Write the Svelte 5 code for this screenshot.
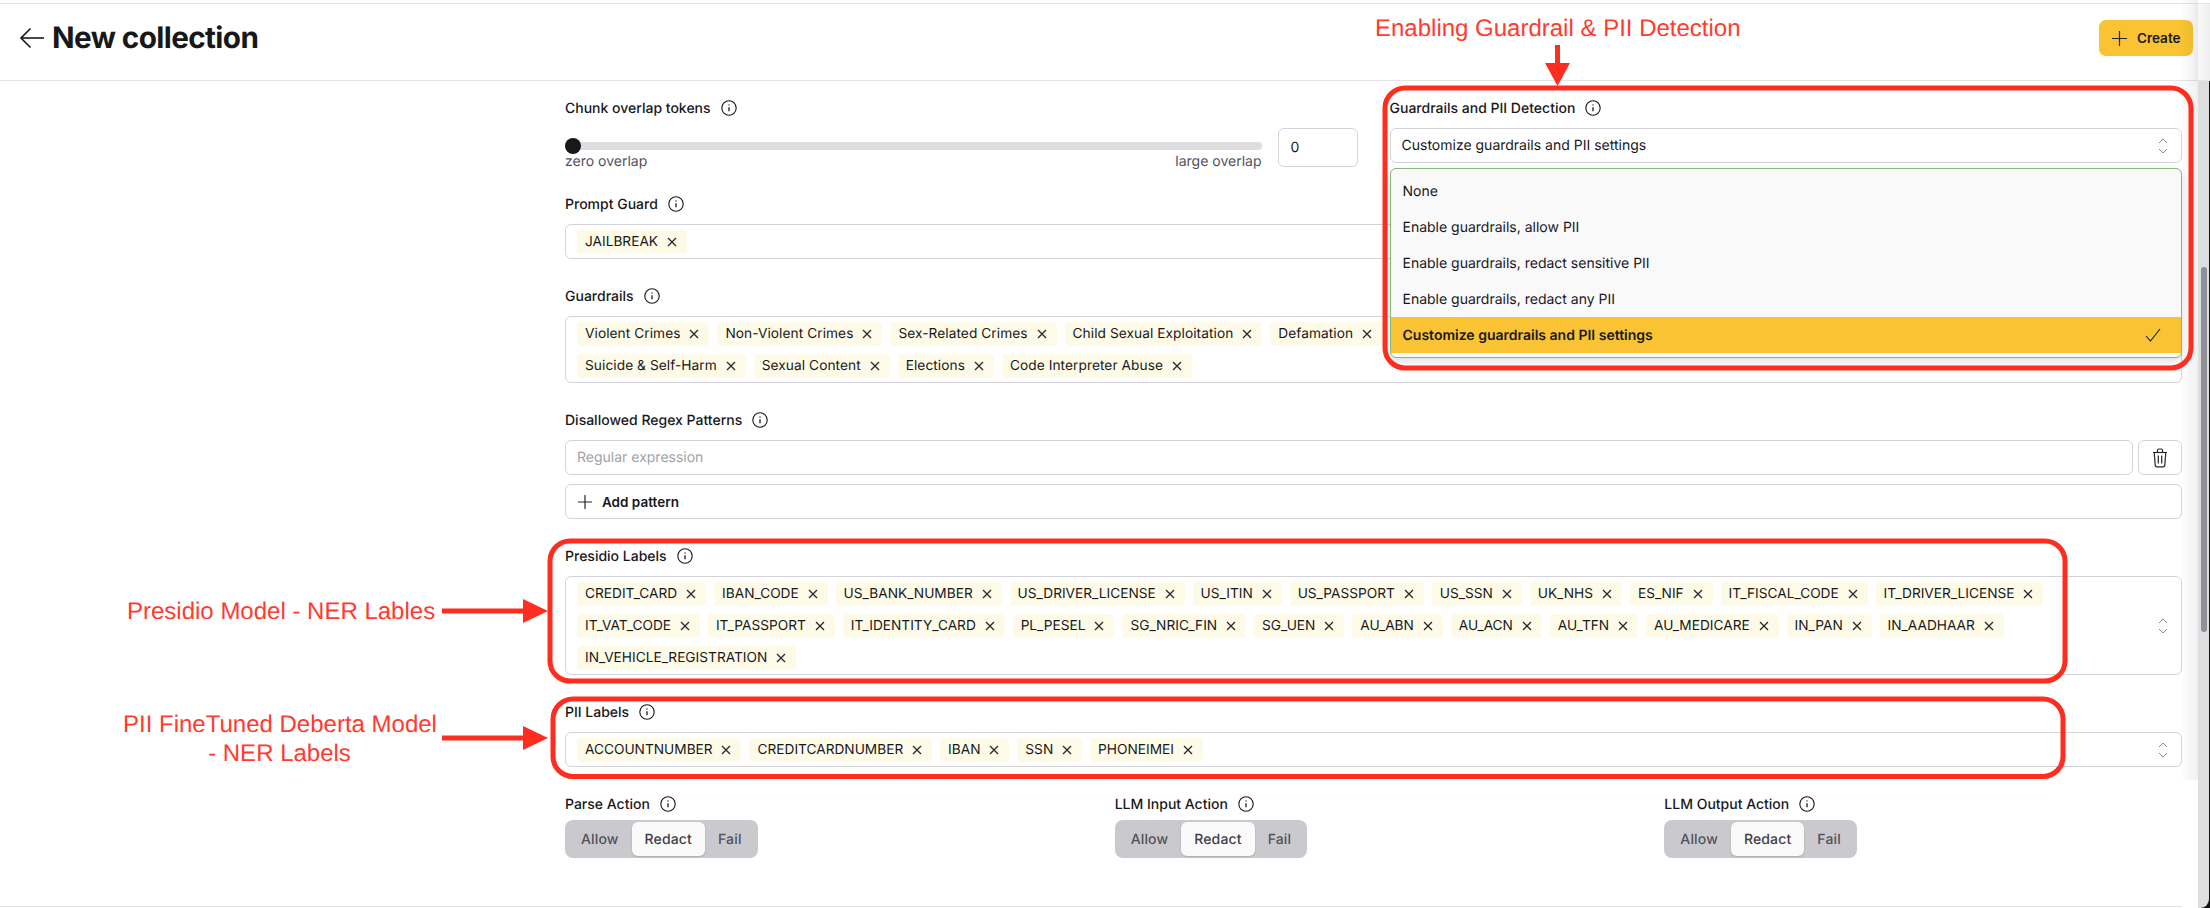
<script>
  const guardrails = [
    ["Violent Crimes", "Non-Violent Crimes", "Sex-Related Crimes", "Child Sexual Exploitation", "Defamation"],
    ["Suicide & Self-Harm", "Sexual Content", "Elections", "Code Interpreter Abuse"]
  ];
  const presidio = [
    ["CREDIT_CARD", "IBAN_CODE", "US_BANK_NUMBER", "US_DRIVER_LICENSE", "US_ITIN", "US_PASSPORT", "US_SSN", "UK_NHS", "ES_NIF", "IT_FISCAL_CODE", "IT_DRIVER_LICENSE"],
    ["IT_VAT_CODE", "IT_PASSPORT", "IT_IDENTITY_CARD", "PL_PESEL", "SG_NRIC_FIN", "SG_UEN", "AU_ABN", "AU_ACN", "AU_TFN", "AU_MEDICARE", "IN_PAN", "IN_AADHAAR"],
    ["IN_VEHICLE_REGISTRATION"]
  ];
  const pii = [["ACCOUNTNUMBER", "CREDITCARDNUMBER", "IBAN", "SSN", "PHONEIMEI"]];
  const options = ["None", "Enable guardrails, allow PII", "Enable guardrails, redact sensitive PII", "Enable guardrails, redact any PII"];
  const actions = ["Parse Action", "LLM Input Action", "LLM Output Action"];
</script>

{#snippet label(text)}
  <div class="label">
    <span>{text}</span>
    <svg width="16" height="16" viewBox="0 0 16 16" fill="none" stroke="#18181b" stroke-width="1.1">
      <circle cx="8" cy="8" r="7.2" />
      <path d="M8 7.2v4" stroke-width="1.3" />
      <path d="M8 4.4v1.2" stroke-width="1.4" />
    </svg>
  </div>
{/snippet}

{#snippet updown()}
  <svg class="updown" width="10" height="16" viewBox="0 0 10 16" fill="none" stroke="#8a8a92" stroke-width="1">
    <path d="M1 5l4-4 4 4" />
    <path d="M1 11l4 4 4-4" />
  </svg>
{/snippet}

{#snippet chips(rows, arrows)}
  <div class="chipbox">
    <div class="rows">
      {#each rows as row}
        <div class="row">
          {#each row as chip}
            <span class="chip">
              {chip}
              <svg width="10" height="10" viewBox="0 0 10 10" fill="none" stroke="#27272a" stroke-width="1.25">
                <path d="M1 1l8 8M9 1l-8 8" />
              </svg>
            </span>
          {/each}
        </div>
      {/each}
    </div>
    {#if arrows}
      {@render updown()}
    {/if}
  </div>
{/snippet}

<div class="page">
  <header>
    <svg width="26" height="22" viewBox="0 0 26 22" fill="none" stroke="#18181b" stroke-width="1.6">
      <path d="M25 11H2" />
      <path d="M11.5 1.5L2 11l9.5 9.5" />
    </svg>
    <h1>New collection</h1>
    <button class="create">
      <svg width="15" height="15" viewBox="0 0 15 15" fill="none" stroke="#27272a" stroke-width="1.2">
        <path d="M7.5 0v15M0 7.5h15" />
      </svg>
      Create
    </button>
  </header>

  <main>
    <div class="content">
      <form>
        <div class="top">
          <section>
            {@render label("Chunk overlap tokens")}
            <div class="overlap">
              <div class="slider">
                <div class="track"><i class="thumb"></i></div>
                <div class="ends"><span>zero overlap</span><span>large overlap</span></div>
              </div>
              <div class="number">0</div>
            </div>
          </section>
          <section class="pii-col">
            {@render label("Guardrails and PII Detection")}
            <div class="field select">
              Customize guardrails and PII settings
              {@render updown()}
            </div>
            <ul class="dropdown">
              {#each options as option}
                <li>{option}</li>
              {/each}
              <li class="selected">
                Customize guardrails and PII settings
                <svg width="16" height="14" viewBox="0 0 16 14" fill="none" stroke="#18181b" stroke-width="1.1">
                  <path d="M1 8l4.5 5L15 1" />
                </svg>
              </li>
            </ul>
          </section>
        </div>

        <section>
          {@render label("Prompt Guard")}
          {@render chips([["JAILBREAK"]], false)}
        </section>

        <section class="mixed">
          {@render label("Guardrails")}
          {@render chips(guardrails, false)}
        </section>

        <section>
          {@render label("Disallowed Regex Patterns")}
          <div class="pattern">
            <div class="field placeholder">Regular expression</div>
            <button class="trash" type="button" aria-label="Delete pattern">
              <svg width="16" height="20" viewBox="0 0 16 20" fill="none" stroke="#27272a" stroke-width="1.2">
                <path d="M1 4.5h14" />
                <path d="M5.5 4.5V2.2c0-.7.5-1.2 1.2-1.2h2.6c.7 0 1.2.5 1.2 1.2v2.3" />
                <path d="M2.2 4.5l1 12.6c.1 1 .8 1.7 1.8 1.7h6c1 0 1.7-.7 1.8-1.7l1-12.6" />
                <path d="M6.3 7.5v8M9.7 7.5v8" />
              </svg>
            </button>
          </div>
          <button class="add" type="button">
            <svg width="14" height="14" viewBox="0 0 14 14" fill="none" stroke="#27272a" stroke-width="1.2">
              <path d="M7 0v14M0 7h14" />
            </svg>
            Add pattern
          </button>
        </section>

        <section>
          {@render label("Presidio Labels")}
          {@render chips(presidio, true)}
        </section>

        <section>
          {@render label("PII Labels")}
          {@render chips(pii, true)}
        </section>

        <div class="actions">
          {#each actions as action}
            <section>
              {@render label(action)}
              <div class="segment">
                <span>Allow</span>
                <span class="active">Redact</span>
                <span>Fail</span>
              </div>
            </section>
          {/each}
        </div>
      </form>
      <div class="foot"></div>
    </div>
    <div class="scrollbar"><i></i></div>
  </main>

  <!-- annotations drawn on top of the screenshot -->
  <svg class="marks" width="2210" height="908" fill="none" stroke="#ff2d1f" stroke-width="5">
    <rect x="1385" y="88" width="806" height="280" rx="20" />
    <rect x="550" y="541" width="1515" height="140" rx="20" />
    <rect x="553" y="699" width="1510" height="77.5" rx="20" />
    <path d="M1557.500 45v20M442 611h84M442 738h84" />
    <path d="M1545 63h25l-12.500 23z" fill="#ff2d1f" stroke="none" />
    <path d="M523 599v24l25-12z" fill="#ff2d1f" stroke="none" />
    <path d="M523 726v24l25-12z" fill="#ff2d1f" stroke="none" />
  </svg>
  <div class="note enabling">Enabling Guardrail &amp; PII Detection</div>
  <div class="note presidio">Presidio Model - NER Lables</div>
  <div class="note deberta">PII FineTuned Deberta Model<br />- NER Labels</div>
</div>

<style>
  :global(body) {
    margin: 0;
    background: #fff;
  }

  .page {
    position: relative;
    width: 2210px;
    height: 908px;
    overflow: hidden;
    font-family: Inter, "Liberation Sans", sans-serif;
    text-rendering: geometricPrecision;
    color: #18181b;
    background: #fff;
  }

  .page::after {
    content: "";
    position: absolute;
    top: 0;
    right: 12px;
    width: 18px;
    height: 780px;
    background: linear-gradient(to right, transparent, rgba(0, 0, 0, 0.06));
    pointer-events: none;
  }

  header {
    display: flex;
    align-items: center;
    box-sizing: border-box;
    height: 78px;
    margin-top: 3px;
    padding: 0 17px 8px 19px;
    border-top: 1px solid #e4e4e7;
    border-bottom: 1px solid #e4e4e7;
    background: linear-gradient(to right, #fff 2190px, #efeff0);
  }

  h1 {
    margin: 0 0 0 7px;
    font-size: 29.700px;
    font-weight: 700;
    letter-spacing: -0.6px;
  }

  .create {
    display: flex;
    align-items: center;
    gap: 10px;
    width: 94px;
    height: 36px;
    margin-left: auto;
    padding: 0 0 0 13px;
    border: 0;
    border-radius: 7px;
    background: #f9c333;
    color: #18181b;
    font: 600 13.500px Inter, sans-serif;
    box-sizing: border-box;
  }

  main {
    display: flex;
    height: 827px;
    background: #111;
  }

  .content {
    width: 2198px;
    background: #fff;
  }

  form {
    display: flex;
    flex-direction: column;
    gap: 27px;
    box-sizing: border-box;
    width: 2182px;
    padding: 17px 0 0 565px;
  }

  .foot {
    width: 2182px;
    margin-top: 48px;
    border-top: 1px solid #e4e4e7;
  }

  .scrollbar {
    position: relative;
    width: 11px;
    border-right: 1px solid #111;
    background: #dedee0;
    border-bottom-right-radius: 9px;
  }

  .scrollbar i {
    position: absolute;
    top: 186px;
    left: 3px;
    width: 6px;
    height: 365px;
    border-radius: 3px;
    background: #8f8f96;
  }

  .top {
    display: grid;
    grid-template-columns: 1fr 1fr;
    gap: 32px;
  }

  .actions {
    display: grid;
    grid-template-columns: repeat(3, 1fr);
    gap: 32px;
  }

  .label {
    display: flex;
    align-items: center;
    gap: 10px;
    height: 20px;
    margin-bottom: 10px;
    font-size: 14px;
    font-weight: 500;
  }

  .actions .label {
    margin-bottom: 6px;
  }

  .overlap {
    display: flex;
    gap: 16px;
    height: 39px;
  }

  .slider {
    flex: 1;
    padding-top: 14px;
  }

  .track {
    position: relative;
    height: 8px;
    border-radius: 4px;
    background: #dedee0;
  }

  .thumb {
    position: absolute;
    top: -4px;
    left: 0;
    width: 16px;
    height: 16px;
    border-radius: 50%;
    background: #18181b;
  }

  .ends {
    display: flex;
    justify-content: space-between;
    margin-top: 4px;
    font-size: 14px;
    line-height: 16px;
    color: #52525b;
  }

  .number {
    box-sizing: border-box;
    width: 80px;
    padding: 0 12px;
    border: 1px solid #d4d4d8;
    border-radius: 6px;
    font-size: 14px;
    line-height: 37px;
  }

  .pii-col {
    position: relative;
  }

  .field {
    display: flex;
    align-items: center;
    box-sizing: border-box;
    flex: 1;
    height: 35px;
    padding: 0 11px;
    border: 1px solid #d4d4d8;
    border-radius: 6px;
    font-size: 14px;
    background: #fff;
  }

  .updown {
    position: absolute;
    right: 13px;
    top: 50%;
    transform: translateY(-50%);
  }

  .select {
    position: relative;
    z-index: 1;
  }

  .placeholder {
    color: #a1a1aa;
  }

  .dropdown {
    position: absolute;
    z-index: 2;
    top: 70px;
    left: 0;
    right: 0;
    box-sizing: border-box;
    height: 190px;
    margin: 0;
    padding: 4px 0;
    list-style: none;
    border: 1.5px solid #84b97b;
    border-radius: 6px;
    background: #f9f9f9;
    box-shadow: 0 4px 10px rgba(0, 0, 0, 0.12);
    font-size: 14px;
  }

  .dropdown li {
    display: flex;
    align-items: center;
    justify-content: space-between;
    height: 36px;
    padding: 0 20px 0 12px;
  }

  .dropdown .selected {
    background: #f9c333;
    font-weight: 600;
  }

  .chipbox {
    position: relative;
    box-sizing: border-box;
    padding: 5px 11px 4px;
    border: 1px solid #d4d4d8;
    border-radius: 6px;
    background: #fff;
  }

  .rows {
    display: flex;
    flex-direction: column;
    gap: 8px;
  }

  .row {
    display: flex;
    gap: 8px;
  }

  .chip {
    display: inline-flex;
    align-items: center;
    gap: 5px;
    height: 24px;
    padding: 0 10px 0 8px;
    border-radius: 4px;
    background: #fdfbe8;
    font-size: 13.700px;
    white-space: pre;
  }

  .mixed .chip {
    letter-spacing: 0.07px;
  }

  .pattern {
    display: flex;
    gap: 5px;
  }

  .trash {
    display: flex;
    align-items: center;
    justify-content: center;
    width: 44px;
    height: 35px;
    padding: 0;
    border: 1px solid #d4d4d8;
    border-radius: 6px;
    background: #fff;
  }

  .add {
    display: flex;
    align-items: center;
    gap: 10px;
    box-sizing: border-box;
    width: 100%;
    height: 35px;
    margin-top: 9px;
    padding: 0 11px 0 12px;
    border: 1px solid #d4d4d8;
    border-radius: 6px;
    background: #fff;
    color: #18181b;
    font: 600 13.500px Inter, sans-serif;
  }

  .segment {
    display: inline-flex;
    align-items: center;
    box-sizing: border-box;
    height: 38px;
    padding: 0 3px;
    border-radius: 8px;
    background: #c9c9ce;
    font-size: 14px;
    font-weight: 500;
    letter-spacing: 0.15px;
    color: #52525b;
  }

  .segment span {
    display: flex;
    align-items: center;
    height: 34px;
    padding: 0 13px;
    border-radius: 6px;
  }

  .segment .active {
    background: #fafafa;
    color: #3f3f46;
    box-shadow: 0 1px 2px rgba(0, 0, 0, 0.15);
  }

  .marks {
    position: absolute;
    top: 0;
    left: 0;
    z-index: 3;
    pointer-events: none;
  }

  .note {
    position: absolute;
    z-index: 3;
    font-family: "Liberation Sans", Arial, sans-serif;
    font-size: 24px;
    line-height: 29px;
    color: #ff3b30;
    white-space: nowrap;
  }

  .enabling {
    top: 14px;
    left: 1375px;
  }

  .presidio {
    top: 597px;
    left: 127px;
  }

  .deberta {
    top: 710px;
    left: 123px;
    width: 313px;
    text-align: center;
  }
</style>
